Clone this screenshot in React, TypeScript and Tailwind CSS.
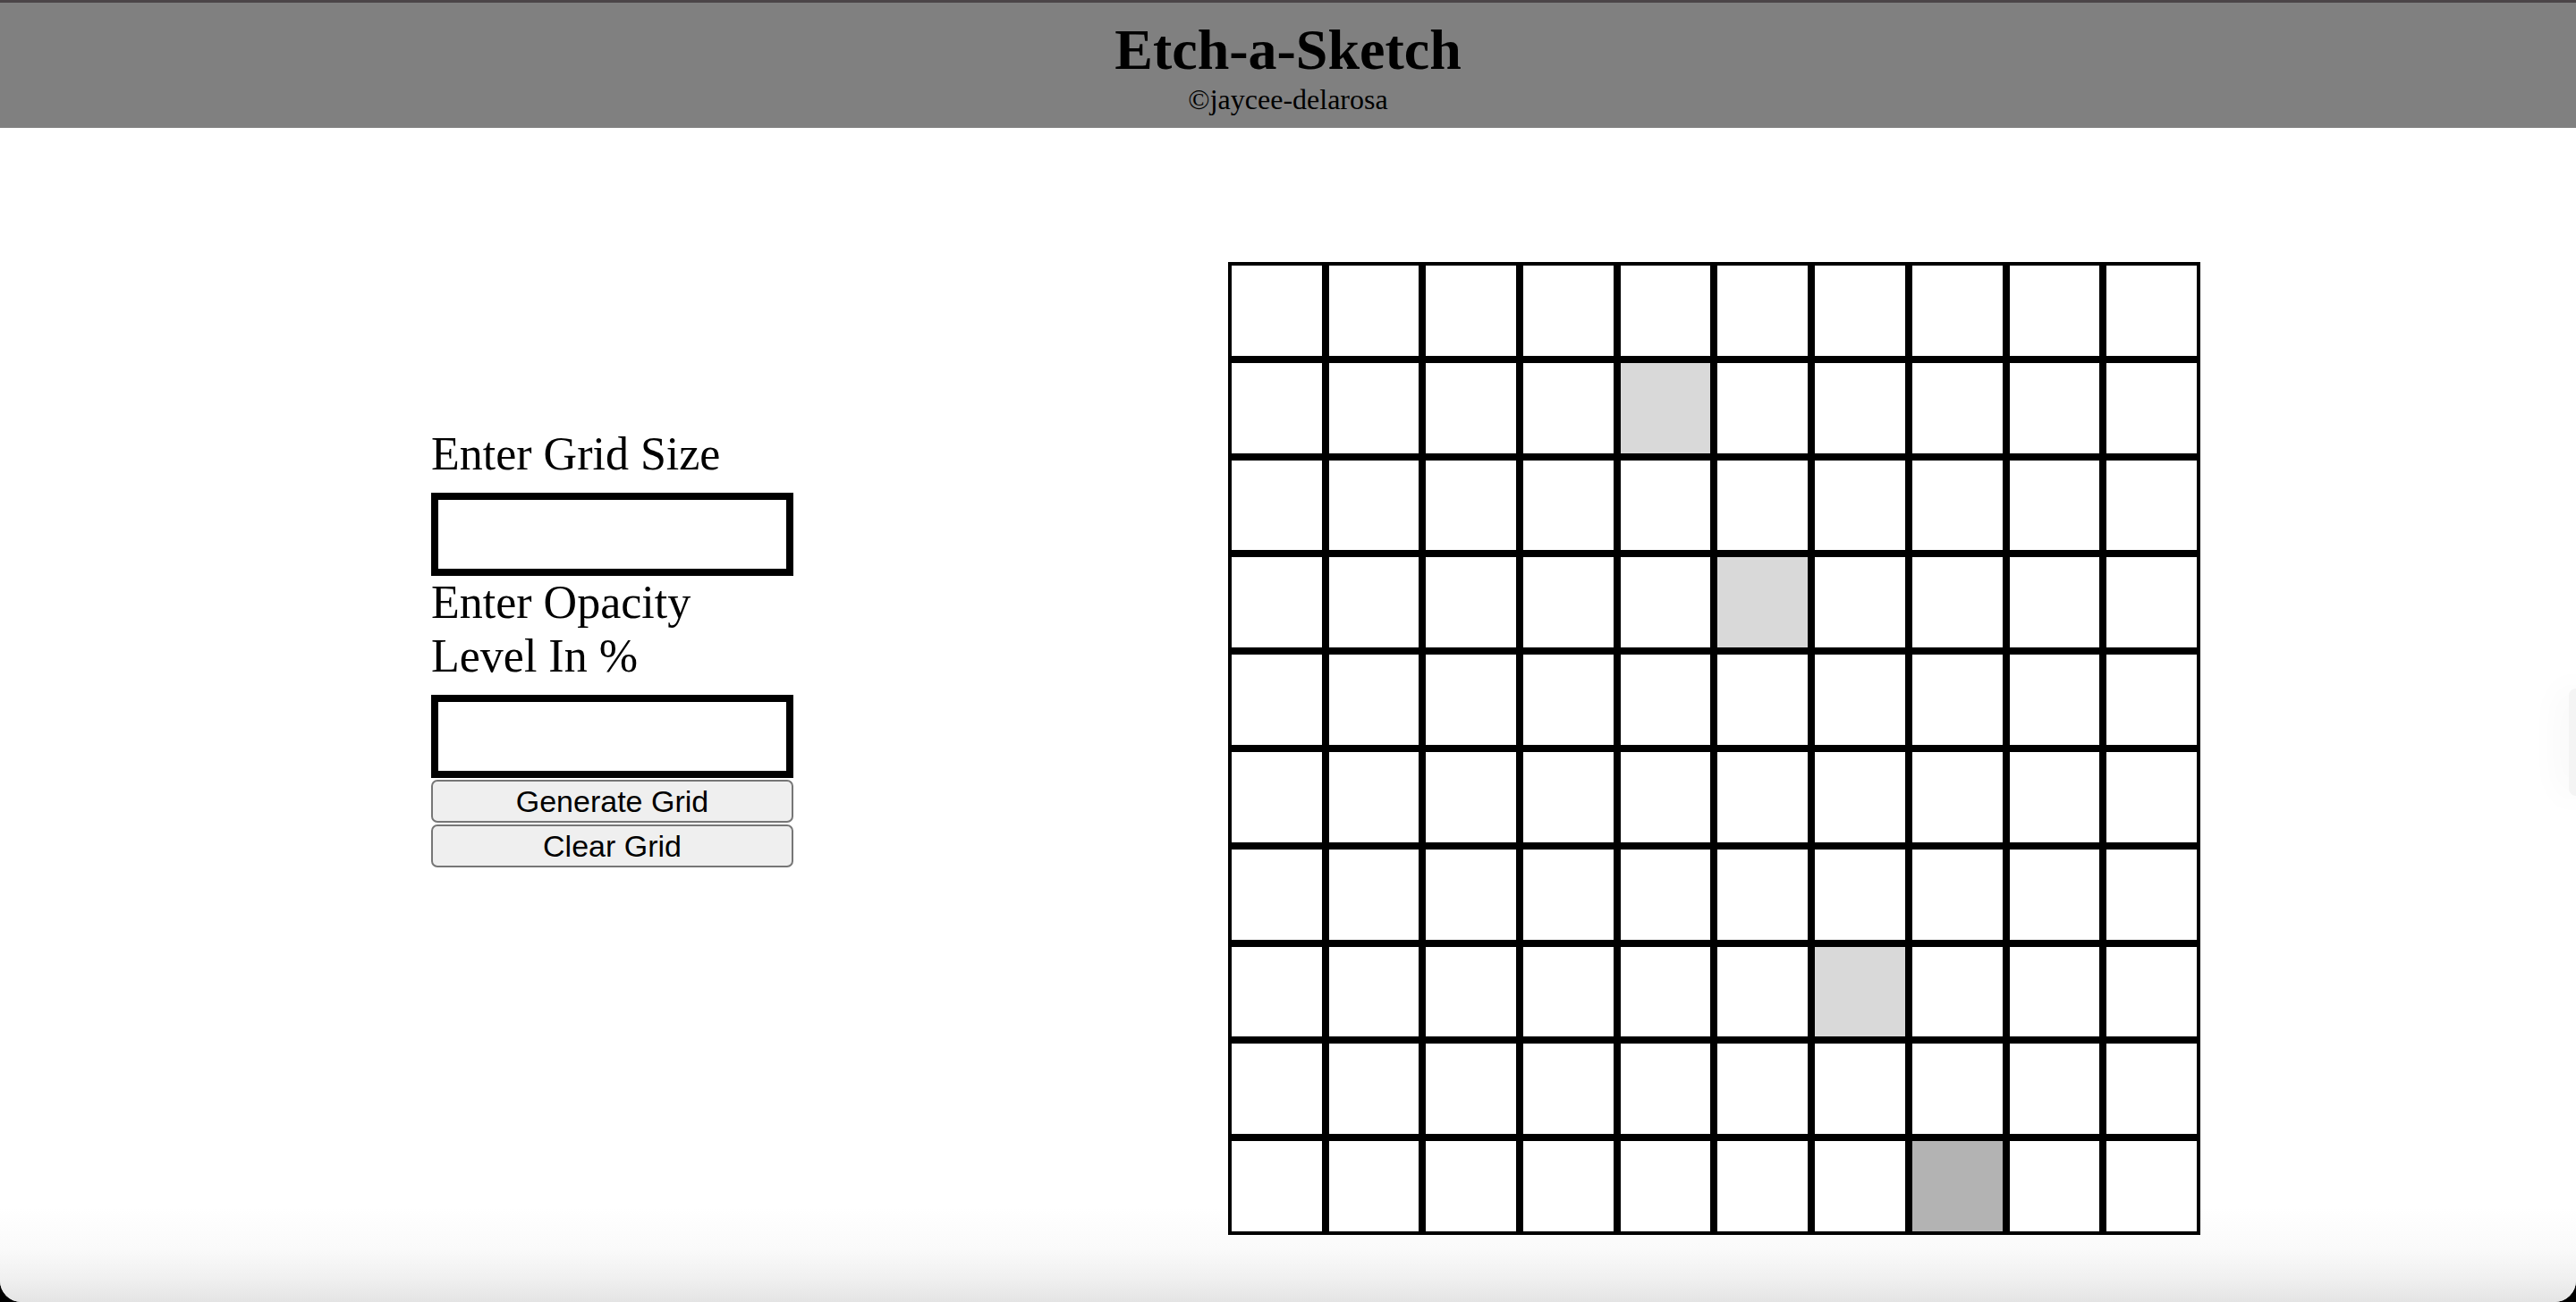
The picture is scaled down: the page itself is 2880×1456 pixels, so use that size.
import React from "react";

const shaded: Record<string, string> = {
  "1-4": "bg-[#d9d9d9]",
  "3-5": "bg-[#d9d9d9]",
  "7-6": "bg-[#d9d9d9]",
  "9-7": "bg-[#b3b3b3]",
};

export default function App() {
  const cells = [];
  for (let r = 0; r < 10; r++) {
    for (let c = 0; c < 10; c++) {
      const cls = shaded[`${r}-${c}`] ?? "bg-white";
      cells.push(<div key={`${r}-${c}`} className={`border-4 border-black ${cls}`} />);
    }
  }

  return (
    <div className="w-[2880px] h-[1456px] bg-black">
      <div className="relative w-full h-full bg-white rounded-b-[24px] overflow-hidden flex flex-col">
        <header className="h-[143px] shrink-0 bg-[#808080] border-t-[3px] border-[#4b4548] flex flex-col items-center pt-[21px] text-black [font-family:'Liberation_Serif',serif]">
          <h1 className="text-[64px] leading-none font-bold">Etch-a-Sketch</h1>
          <div className="mt-[7px] text-[32px] leading-none">©jaycee-delarosa</div>
        </header>

        <main className="flex-1 flex flex-row items-start bg-[linear-gradient(to_bottom,#ffffff_92%,#fafafa_95.5%,#f0f0f0_98%,#e4e4e4)]">
          <div className="ml-[482px] mt-[335px] w-[405px] flex flex-col [font-family:'Liberation_Serif',serif] text-black">
            <label className="text-[52px] leading-[60px] mb-[13px]">Enter Grid Size</label>
            <input className="w-[405px] h-[93px] border-[8px] border-black bg-white outline-none" />
            <label className="text-[52px] leading-[60px] mb-[13px]">Enter Opacity Level In %</label>
            <input className="w-[405px] h-[93px] border-[8px] border-black bg-white outline-none" />
            <button className="mt-[2px] w-[405px] h-[48px] bg-[#efefef] border-2 border-[#767676] rounded-[7px] text-[34px] leading-none text-black [font-family:'Liberation_Sans',Arial,sans-serif]">
              Generate Grid
            </button>
            <button className="mt-[2px] w-[405px] h-[48px] bg-[#efefef] border-2 border-[#767676] rounded-[7px] text-[34px] leading-none text-black [font-family:'Liberation_Sans',Arial,sans-serif]">
              Clear Grid
            </button>
          </div>

          <div className="ml-[486px] mt-[150px] w-[1087px] h-[1088px] grid grid-cols-10 grid-rows-10">
            {cells}
          </div>
        </main>

        <div className="absolute right-0 top-[770px] w-[8px] h-[120px] rounded-l-[8px] bg-[#f4f4f4] shadow-[0_0_40px_rgba(0,0,0,0.12)]" />
      </div>
    </div>
  );
}
